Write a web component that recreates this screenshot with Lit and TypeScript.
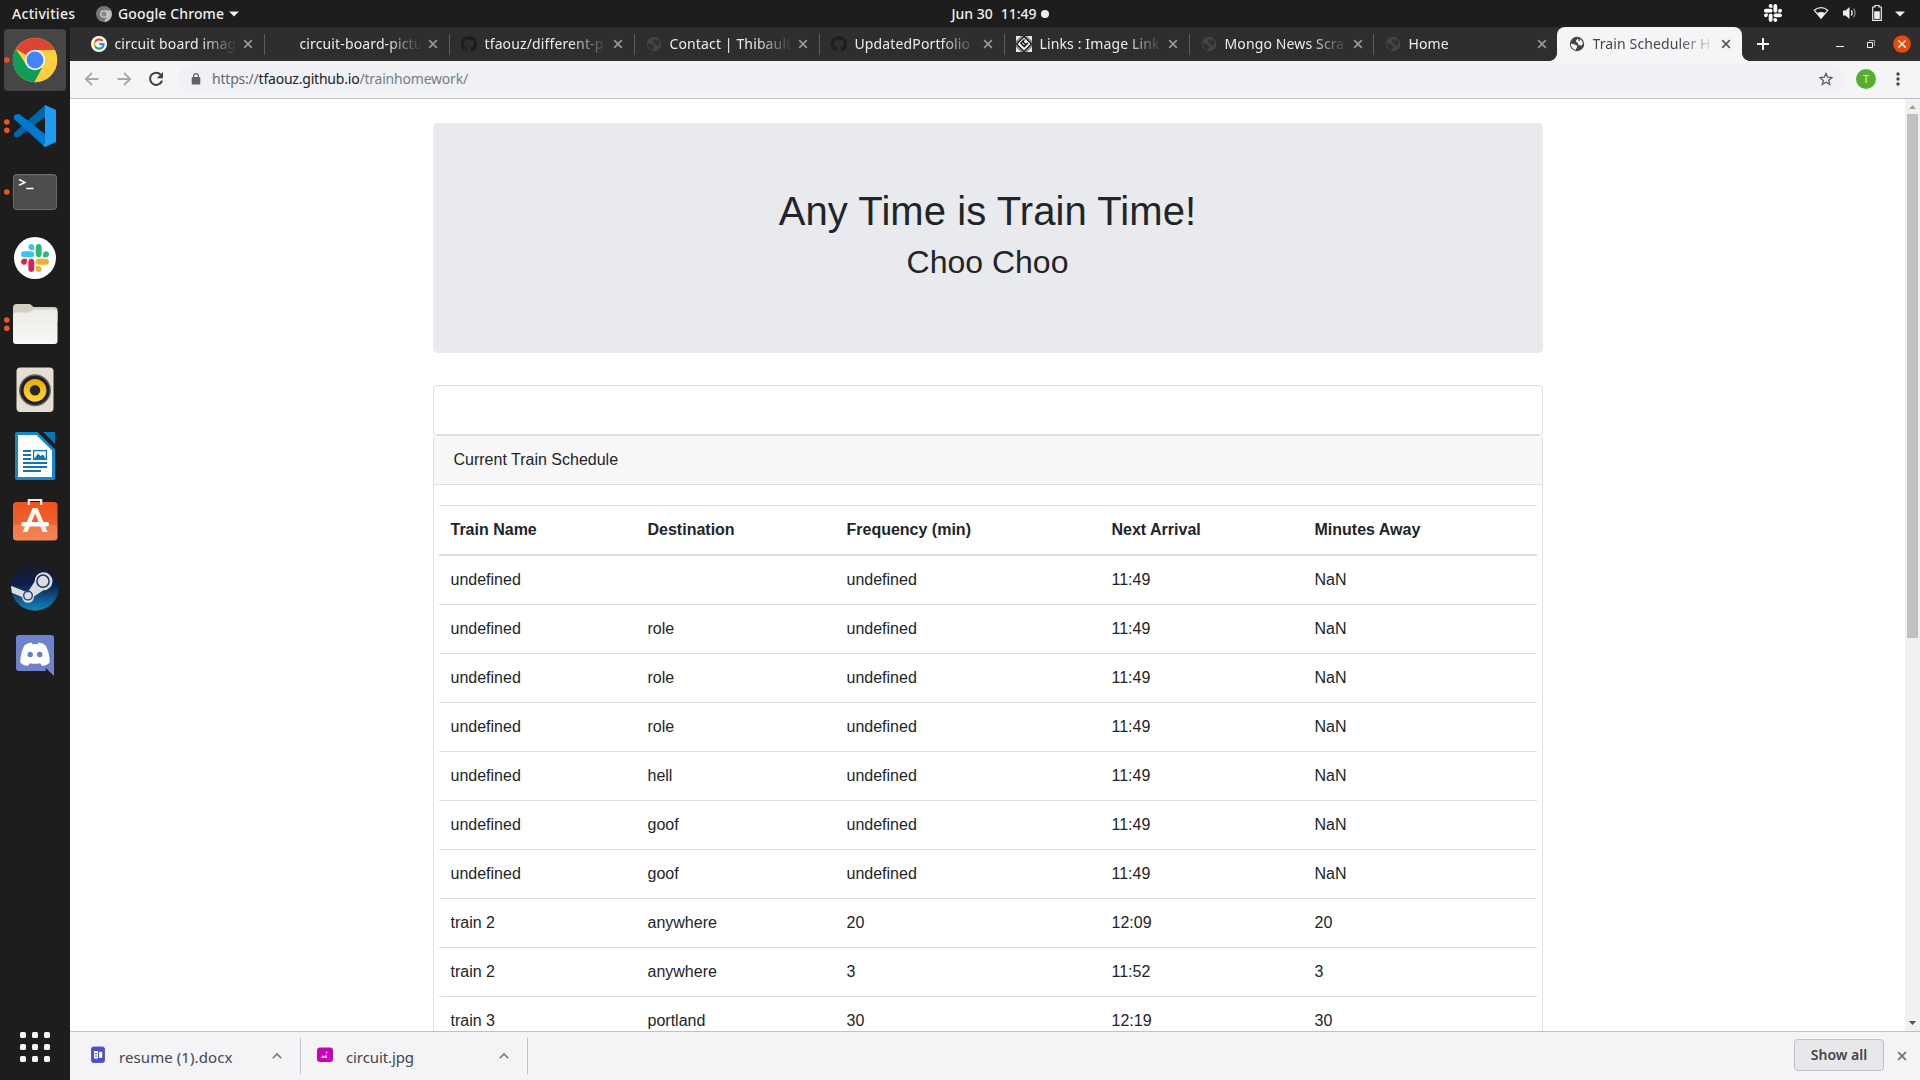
import { LitElement, html, svg, css, nothing } from "lit";
import { customElement } from "lit/decorators.js";
import { classMap } from "lit/directives/class-map.js";

interface Tab {
  title: string;
  icon: "google" | "none" | "github" | "globe" | "links";
  active?: boolean;
}

interface Train {
  name: string;
  dest: string;
  freq: string;
  next: string;
  away: string;
}

const TABS: Tab[] = [
  { title: "circuit board imag", icon: "google" },
  { title: "circuit-board-pictu", icon: "none" },
  { title: "tfaouz/different-p", icon: "github" },
  { title: "Contact | Thibault", icon: "globe" },
  { title: "UpdatedPortfolio", icon: "github" },
  { title: "Links : Image Link", icon: "links" },
  { title: "Mongo News Scra", icon: "globe" },
  { title: "Home", icon: "globe" },
  { title: "Train Scheduler H", icon: "globe", active: true },
];

const broken = (dest: string): Train => ({ name: "undefined", dest, freq: "undefined", next: "11:49", away: "NaN" });

const TRAINS: Train[] = [
  broken(""),
  broken("role"),
  broken("role"),
  broken("role"),
  broken("hell"),
  broken("goof"),
  broken("goof"),
  { name: "train 2", dest: "anywhere", freq: "20", next: "12:09", away: "20" },
  { name: "train 2", dest: "anywhere", freq: "3", next: "11:52", away: "3" },
  { name: "train 3", dest: "portland", freq: "30", next: "12:19", away: "30" },
];

const SLACK = [
  ["#e01e5a", "M25.8 77.6c0 7.1-5.8 12.9-12.9 12.9S0 84.7 0 77.6s5.8-12.9 12.9-12.9h12.9v12.9zm6.5 0c0-7.1 5.8-12.9 12.9-12.9s12.9 5.8 12.9 12.9v32.3c0 7.1-5.8 12.9-12.9 12.9s-12.9-5.8-12.9-12.9V77.6z"],
  ["#36c5f0", "M45.2 25.8c-7.1 0-12.9-5.8-12.9-12.9S38.1 0 45.2 0s12.9 5.8 12.9 12.9v12.9H45.2zm0 6.5c7.1 0 12.9 5.8 12.9 12.9s-5.8 12.9-12.9 12.9H12.9C5.8 58.1 0 52.3 0 45.2s5.8-12.9 12.9-12.9h32.3z"],
  ["#2eb67d", "M97 45.2c0-7.1 5.8-12.9 12.9-12.9s12.9 5.8 12.9 12.9-5.8 12.9-12.9 12.9H97V45.2zm-6.5 0c0 7.1-5.8 12.9-12.9 12.9s-12.9-5.8-12.9-12.9V12.9C64.7 5.8 70.5 0 77.6 0s12.9 5.8 12.9 12.9v32.3z"],
  ["#ecb22e", "M77.6 97c7.1 0 12.9 5.8 12.9 12.9s-5.8 12.9-12.9 12.9-12.9-5.8-12.9-12.9V97h12.9zm0-6.5c-7.1 0-12.9-5.8-12.9-12.9s5.8-12.9 12.9-12.9h32.3c7.1 0 12.9 5.8 12.9 12.9s-5.8 12.9-12.9 12.9H77.6z"],
];

const GITHUB =
  "M8 0C3.58 0 0 3.58 0 8c0 3.54 2.29 6.53 5.47 7.59.4.07.55-.17.55-.38 0-.19-.01-.82-.01-1.49-2.01.37-2.53-.49-2.69-.94-.09-.23-.48-.94-.82-1.13-.28-.15-.68-.52-.01-.53.63-.01 1.08.58 1.23.82.72 1.21 1.87.87 2.33.66.07-.52.28-.87.51-1.07-1.78-.2-3.64-.89-3.64-3.95 0-.87.31-1.59.82-2.15-.08-.2-.36-1.02.08-2.12 0 0 .67-.21 2.2.82.64-.18 1.32-.27 2-.27.68 0 1.36.09 2 .27 1.53-1.04 2.2-.82 2.2-.82.44 1.1.16 1.92.08 2.12.51.56.82 1.27.82 2.15 0 3.07-1.87 3.75-3.65 3.95.29.25.54.73.54 1.48 0 1.07-.01 1.93-.01 2.2 0 .21.15.46.55.38A8.013 8.013 0 0016 8c0-4.42-3.58-8-8-8z";

/* Launcher icons, each on a 70x66 tile centred at 35,33. */
const LAUNCHERS = [
  { dots: 1, art: svg`
    <rect x="4" y="2" width="62" height="62" rx="4" fill="#464646"/>
    <circle cx="35" cy="33" r="22.2" fill="#ffcd40"/>
    <path d="M35 33 L15.8 21.9 A22.2 22.2 0 0 1 54.8 23 L35 23z" fill="#db4437"/>
    <path d="M35 33 L43.7 38 L34.5 55.2 A22.2 22.2 0 0 1 15.8 21.9 L26.3 38z" fill="#0f9d58"/>
    <path d="M35 23H54.8A22.2 22.2 0 0 1 34.5 55.2L43.7 38z" fill="#ffcd40"/>
    <circle cx="35" cy="33" r="10.2" fill="#f4f4f4"/><circle cx="35" cy="33" r="8.4" fill="#4285f4"/>` },
  { dots: 2, art: svg`
    <path d="M14 43.5V40L45 12V24L18.5 44.2Q16.5 45 14 43.5z" fill="#0065a9"/>
    <path d="M14 22.5L18 21Q19.5 21 21 22.3L45 41V54L14 26z" fill="#007acc"/>
    <path d="M45 12L56 17V49L45 54L43 52.5L45 50z" fill="#1f9cf0"/>` },
  { dots: 1, art: svg`
    <rect x="13" y="15" width="44" height="36" rx="4" fill="#6b6b6b"/><rect x="14" y="16.2" width="42" height="33.8" rx="3" fill="#4c4c4c"/>
    <path d="M19 20.5L25 23.4L19 26.3M26.2 29.6H33.6" fill="none" stroke="#fff" stroke-width="1.5"/>` },
  { dots: 0, art: svg`
    <circle cx="35" cy="33" r="21" fill="#fff"/>
    <g transform="translate(21 19) scale(.228)">${SLACK.map(([c, d]) => svg`<path d=${d} fill=${c}></path>`)}</g>` },
  { dots: 2, art: svg`
    <path d="M13 17Q13 13 16.5 13H30L33.5 16H54Q57.5 16 57.5 19V30H13z" fill="#d3cfc0"/>
    <path d="M13 24.5Q13 21.5 16 21.5H29L33.5 18.5H54.5Q57.5 18.5 57.5 21V50Q57.5 53 54.5 53H16Q13 53 13 50z" fill="url(#fold)"/>` },
  { dots: 0, art: svg`
    <rect x="16.5" y="10.5" width="37" height="44.5" rx="4" fill="#e4dfd2"/>
    <circle cx="35" cy="33.3" r="16" fill="#6b6762"/><circle cx="35" cy="33.3" r="14.6" fill="#1f1e2b"/>
    <circle cx="35" cy="33.3" r="11.4" fill="url(#yel)"/><circle cx="35" cy="33.3" r="5.2" fill="#272727"/>` },
  { dots: 0, art: svg`
    <path d="M15 11Q15 9 17 9H37.5L55 26.5V55Q55 57 53 57H17Q15 57 15 55z" fill="#1388cc"/>
    <path d="M43 9H55V21z" fill="#0e75b4"/>
    <path d="M18 12H36.5L52 27.5V54H18z" fill="#fff"/>
    <path d="M23 28H31M23 32H31M23 36H31M23 40H47M23 44H47M23 48H41" stroke="#1175ae" stroke-width="1.9"/>
    <rect x="33.6" y="27.6" width="12.8" height="8.8" fill="#fff" stroke="#1175ae" stroke-width="1.3"/>
    <path d="M34 36L38 30.5L40.5 33L43 31.5L46 36z" fill="#1175ae"/>` },
  { dots: 0, art: svg`
    <rect x="13" y="13" width="44.5" height="38.5" rx="3.5" fill="url(#org)"/>
    <path d="M28.8 16V11H41.2V16" fill="none" stroke="#f4eee8" stroke-width="2.2"/>
    <path d="M32.6 19H37.6L47.5 43H42.6L35.1 24.5L27.5 43H22.6z" fill="#fbf6f2"/>
    <rect x="21" y="33" width="28" height="4.6" rx="2.3" fill="#fff"/>` },
  { dots: 0, art: svg`
    <g transform="translate(0 -.8)"><circle cx="35" cy="32.5" r="24" fill="url(#stm)"/>
    <path d="M11 31.5L27.5 38.2L34.5 27.5A9 9 0 1 1 43.5 36L34 42.4A6 6 0 1 1 22 42.8L11.8 38.5z" fill="#dcdcdc"/>
    <circle cx="43" cy="27" r="6.1" fill="none" stroke="#17356b" stroke-width="1.5"/>
    <circle cx="28" cy="41.4" r="4.3" fill="none" stroke="#1b4a80" stroke-width="1.4"/></g>` },
  { dots: 0, art: svg`
    <path d="M16 17Q16 14 19 14H51Q54 14 54 17V55L45.5 46.8L46 50H19Q16 50 16 47z" fill="#6f83cc"/>
    <path d="M20.3 41.5Q20.2 32 24.5 24.2Q28 21.6 31.5 21.5L32.4 23.2Q35 22.8 37.6 23.2L38.5 21.5Q42 21.6 45.5 24.2Q49.8 32 49.7 41.5Q46.5 44.8 42 44.8L40.2 42.2Q35 43.4 29.8 42.2L28 44.8Q23.5 44.8 20.3 41.5z" fill="#fff"/>
    <circle cx="30.2" cy="33.5" r="2.7" fill="#6a7dc8"/><circle cx="39.8" cy="33.5" r="2.7" fill="#6a7dc8"/>` },
];

const favicon = (tab: Tab) => {
  const dark = tab.active ? "#454545" : "#454344";
  const cut = tab.active ? "#f5f5f7" : "#302d2e";
  switch (tab.icon) {
    case "google":
      return svg`<circle cx="8" cy="8" r="8" fill="#fff"/><g fill="none" stroke-width="2.2">
        <path d="M4 5.7A4.7 4.7 0 0 1 11.6 4.9" stroke="#ea4335"/><path d="M4 5.7A4.7 4.7 0 0 0 4 10.3" stroke="#fbbc05"/>
        <path d="M4 10.3A4.7 4.7 0 0 0 11 11.6" stroke="#34a853"/><path d="M11 11.6A4.7 4.7 0 0 0 12.6 8.2H8.2" stroke="#4285f4"/></g>`;
    case "github":
      return svg`<path d=${GITHUB} fill="#1e1c1d"/>`;
    case "globe":
      return svg`<circle cx="8" cy="8" r="7.2" fill=${dark}/>
        <path d="M9.3 2.6L7 4.3L7.2 6.1L9 7L9.3 8.9L12.6 9.4L14 7.6Q13.7 4.5 11 2.9L10.6 5L9.3 4.8z" fill=${cut}/>
        <path d="M2 7.6L5.7 8.4L8.3 9.7L7.7 11.8L6.6 13.9Q3 13 2 9.5z" fill=${cut}/>`;
    case "links":
      return svg`<rect width="16" height="16" fill="#8b8b88"/><path d="M0 0H5L0 5zM16 0H11L16 5zM0 16H5L0 11zM16 16H11L16 11z" fill="#e8e8e0"/>
        <path d="M8 .5L15.5 8L8 15.5L.5 8z" fill="#e9e9df" stroke="#111" stroke-width="1.2"/>
        <path d="M8.5 3.6L4.9 7.2L8.2 10.6L11.8 7M6.6 5.5L9.9 8.8" fill="none" stroke="#111" stroke-width="1.4"/>`;
    default:
      return nothing;
  }
};

const cross = svg`<path d="M1.2 1.2L8.8 8.8M8.8 1.2L1.2 8.8"/>`;

@customElement("desktop-dock")
export class DesktopDock extends LitElement {
  static styles = css`
    :host { display: flex; flex-direction: column; width: 70px; height: 1053px; background: #1d1d1d; }
    .tile { display: block; width: 70px; height: 66px; flex: none; }
    .gap { flex: 1; }
    .grid { display: block; width: 30px; height: 30px; margin: 0 0 18px 20px; }
  `;
  render() {
    return html`
      ${LAUNCHERS.map(
        (l) => html`<svg class="tile" viewBox="0 0 70 66">
          <defs>
            <linearGradient id="yel" x1="0" y1="0" x2="0" y2="1"><stop offset="0" stop-color="#e6ac04"/><stop offset="1" stop-color="#ffd83c"/></linearGradient>
            <linearGradient id="fold" x1="0" y1="0" x2="0" y2="1"><stop offset="0" stop-color="#edebe5"/><stop offset="1" stop-color="#f9f8f5"/></linearGradient>
            <linearGradient id="org" x1="0" y1="0" x2="0" y2="1"><stop offset="0" stop-color="#f0521f"/><stop offset=".58" stop-color="#ef6430"/><stop offset=".6" stop-color="#f17a4c"/><stop offset="1" stop-color="#f08552"/></linearGradient>
            <linearGradient id="stm" x1="0" y1="0" x2="0" y2="1"><stop offset="0" stop-color="#1b1c24"/><stop offset=".45" stop-color="#0d1e4b"/><stop offset="1" stop-color="#1287c0"/></linearGradient>
          </defs>
          ${l.art}
          ${l.dots === 1 ? svg`<circle cx="6.8" cy="33" r="2.8" fill="#e95420"/>` : nothing}
          ${l.dots === 2 ? svg`<circle cx="6.8" cy="29" r="2.8" fill="#e95420"/><circle cx="6.8" cy="37.3" r="2.8" fill="#e95420"/>` : nothing}
        </svg>`
      )}
      <div class="gap"></div>
      <svg class="grid" viewBox="0 0 30 30">
        ${[0, 12, 24].map((y) => [0, 12, 24].map((x) => svg`<rect x=${x} y=${y} width="6" height="6" rx="1.5" fill="#f4f4f4"></rect>`))}
      </svg>
    `;
  }
}

@customElement("train-page")
export class TrainPage extends LitElement {
  static styles = css`
    :host { display: block; height: 932px; overflow: hidden; background: #fff; color: #212529; font: 16px/24px "Liberation Sans", Arial, sans-serif; }
    .container { width: 1110px; margin: 24px auto 0; }
    .jumbotron { padding: 64px 32px; margin-bottom: 32px; background: #e9eaee; border-radius: 4.8px; text-align: center; }
    h1, h2 { margin: 0 0 8px; font-weight: 400; line-height: 1.2; }
    h1 { font-size: 40px; letter-spacing: 0.08px; }
    h2 { font-size: 32px; }
    .card { border: 1px solid #dfdfdf; border-radius: 4px; box-sizing: border-box; }
    .empty { height: 50px; }
    .head { padding: 12px 20px; background: #f7f7f7; border-bottom: 1px solid #dfdfdf; border-radius: 3px 3px 0 0; }
    .body { padding: 20px 5px; }
    table { width: 100%; table-layout: fixed; border-collapse: collapse; }
    th, td { padding: 12px; text-align: left; vertical-align: top; border-top: 1px solid #dddfe6; height: 24px; }
    thead th { border-bottom: 2px solid #dddfe6; vertical-align: bottom; }
    .c1 { width: 197px; }
    .c2 { width: 199px; }
    .c3 { width: 265px; }
    .c4 { width: 203px; }
  `;
  render() {
    return html`
      <div class="container">
        <div class="jumbotron"><h1>Any Time is Train Time!</h1><h2>Choo Choo</h2></div>
        <div class="card empty"></div>
        <div class="card">
          <div class="head">Current Train Schedule</div>
          <div class="body">
            <table>
              <colgroup><col class="c1"><col class="c2"><col class="c3"><col class="c4"><col></colgroup>
              <thead><tr><th>Train Name</th><th>Destination</th><th>Frequency (min)</th><th>Next Arrival</th><th>Minutes Away</th></tr></thead>
              <tbody>
                ${TRAINS.map((t) => html`<tr><td>${t.name}</td><td>${t.dest}</td><td>${t.freq}</td><td>${t.next}</td><td>${t.away}</td></tr>`)}
              </tbody>
            </table>
          </div>
        </div>
      </div>
    `;
  }
}

@customElement("app-root")
export class AppRoot extends LitElement {
  static styles = css`
    :host { display: block; width: 1920px; height: 1080px; overflow: hidden; background: #1d1d1d; font: 14px/20px "Noto Sans", "Open Sans", sans-serif; }
    svg { display: block; flex: none; }
    .topbar { display: grid; grid-template-columns: 1fr auto 1fr; align-items: center; height: 27px; color: #efefef; font-weight: 500; }
    .left { display: flex; align-items: center; padding-left: 12px; }
    .act { width: 84px; letter-spacing: 0.3px; }
    .app { margin: 0 5px 0 6px; letter-spacing: 0.12px; }
    .clock { display: flex; align-items: center; gap: 8px; margin-left: 80px; }
    .clock .dot { margin-left: -4px; }
    .right { display: flex; justify-content: flex-end; align-items: center; padding-right: 15px; }
    .tray1 { margin-right: 31px; margin-top: -1px; }
    .tray2 { margin-right: 13px; margin-top: -1px; }
    .tray3 { margin-right: 15px; margin-top: -1px; }
    .tray4 { margin-right: 13px; margin-top: -2px; }
    .main { display: flex; }
    .window { width: 1850px; }
    .strip { display: flex; height: 34px; padding-left: 8.5px; background: #302d2e; box-sizing: border-box; }
    .tab { position: relative; display: flex; align-items: center; width: 185px; box-sizing: border-box; padding-left: 12px; color: #ececec; }
    .tab.narrow { width: 184px; }
    .tab.sep::before { content: ""; position: absolute; left: 0; top: 7px; width: 1px; height: 21px; background: #5e5c5d; }
    .title { width: 125px; margin-left: 8px; white-space: nowrap; letter-spacing: 0.13px; -webkit-mask-image: linear-gradient(90deg, #000 86px, transparent 122px); mask-image: linear-gradient(90deg, #000 86px, transparent 122px); }
    .x { margin-left: 3px; fill: none; stroke: #979697; stroke-width: 1.7; }
    .tab.active { width: 185px; background: #f5f5f7; color: #45454a; border-radius: 8px 8px 0 0; }
    .tab.active::before, .tab.active::after { content: ""; position: absolute; bottom: 0; width: 8px; height: 8px; }
    .tab.active::before { left: -8px; background: radial-gradient(circle at 0 0, transparent 7.6px, #f5f5f7 8.2px); }
    .tab.active::after { right: -8px; background: radial-gradient(circle at 100% 0, transparent 7.6px, #f5f5f7 8.2px); }
    .active .x { stroke: #5a5a5e; }
    .plus { margin: 11px 0 0 15px; }
    .winbtns { display: flex; align-items: center; margin-left: auto; padding-right: 9px; }
    .min { margin-right: 23px; }
    .restore { margin-right: 18px; }
    .toolbar { display: flex; align-items: center; height: 38px; padding: 0 0 2px 14px; background: #f5f5f7; border-bottom: 1px solid #b9bfcc; box-sizing: border-box; }
    .nav { margin-right: 16px; }
    .omni { display: flex; align-items: center; width: 1666px; height: 28px; margin-left: -2px; padding: 0 11px 0 13px; border-radius: 14px; background: #f0f1f4; box-sizing: border-box; }
    .url { flex: 1; margin-left: 11px; color: #7a7d82; letter-spacing: -0.21px; }
    .url b { font-weight: 400; color: #202124; }
    .url .scheme { color: #66696e; }
    .avatar { width: 20px; height: 20px; margin-left: 12px; border-radius: 50%; background: #53b02f; color: #d9f5cd; font-size: 11px; line-height: 20px; text-align: center; }
    .menu { margin-left: 20px; }
    .view { display: flex; }
    train-page { width: 1835px; }
    .scroll { display: flex; flex-direction: column; width: 15px; height: 932px; background: #f1f1f1; }
    .thumb { width: 11px; height: 524px; margin-left: 2px; background: #c1c1c1; }
    .room { flex: 1; }
    .shelf { display: flex; align-items: center; height: 49px; background: #f4f4f7; border-top: 1px solid #bfbfcd; box-sizing: border-box; font-size: 15px; color: #45454a; }
    .file { display: flex; align-items: center; width: 227px; height: 36px; padding-left: 16px; border-right: 1px solid #bfbfcd; box-sizing: border-box; }
    .file.first { width: 231px; padding-left: 20px; }
    .name { flex: 1; margin: 1px 0 0 13px; letter-spacing: -0.1px; }
    .first .name { margin-left: 14px; letter-spacing: 0.08px; }
    .chev { margin-right: 18px; }
    .file svg:first-child { margin-top: -2px; }
    .all { width: 90px; height: 32px; margin: -2px 0 0 auto; border: 1px solid #bfbfcd; border-radius: 4px; background: #e7e8ea; box-sizing: border-box; font-size: 14px; font-weight: 600; line-height: 30px; text-align: center; }
    .shut { margin: -1px 13px 0 13px; fill: none; stroke: #6f7072; stroke-width: 1.7; }
  `;

  render() {
    return html`
      <div class="topbar">
        <div class="left">
          <span class="act">Activities</span>
          <svg width="16" height="16" viewBox="0 0 16 16"><circle cx="8" cy="8" r="8" fill="#777"/><path d="M8 4.4H15A8 8 0 0 1 8 16L11 10z" fill="#bdbdbd"/><circle cx="8" cy="8" r="3.8" fill="#d8d8d8"/><circle cx="8" cy="8" r="2.7" fill="#888"/></svg>
          <span class="app">Google Chrome</span>
          <svg width="10" height="6" viewBox="0 0 10 6"><path d="M0 .5H10L5 5.5z" fill="#efefef"/></svg>
        </div>
        <div class="clock"><span>Jun 30</span><span>11:49</span><svg class="dot" width="8" height="8"><circle cx="4" cy="4" r="4" fill="#efefef"/></svg></div>
        <div class="right">
          <svg class="tray1" width="18" height="18" viewBox="0 0 122.8 122.8">${SLACK.map(([, d]) => svg`<path d=${d} fill="#fff"></path>`)}</svg>
          <svg class="tray2" width="16" height="14" viewBox="0 0 16 14"><path d="M1.2 4.2Q8 -.8 14.8 4.2L8 12.4z" fill="none" stroke="#ededed" stroke-width="1.2"/><path d="M3.8 7.2Q8 5 12.2 7.2L8 12.6z" fill="#ededed"/></svg>
          <svg class="tray3" width="15" height="14" viewBox="0 0 15 14"><path d="M1 4.5H3.5L7.5 1V13L3.5 9.5H1z" fill="#ededed"/><path d="M9.4 4.4Q11 7 9.4 9.6" fill="none" stroke="#ededed" stroke-width="1.4"/><path d="M11.6 2.6Q14.4 7 11.6 11.4" fill="none" stroke="#8a8a8a" stroke-width="1.3"/></svg>
          <svg class="tray4" width="10" height="16" viewBox="0 0 10 16"><path d="M3 .5H7V2H9.3V15.3H.7V2H3z" fill="none" stroke="#ededed" stroke-width="1.2"/><rect x="2.2" y="6.3" width="5.6" height="7.6" fill="#ededed"/></svg>
          <svg width="10" height="6" viewBox="0 0 10 6"><path d="M0 .5H10L5 5.5z" fill="#efefef"/></svg>
        </div>
      </div>
      <div class="main">
        <desktop-dock></desktop-dock>
        <div class="window">
          <div class="strip">
            ${TABS.map(
              (t, i) => html`<div class=${classMap({ tab: true, active: !!t.active, narrow: i > 5, sep: i > 0 && !t.active })}>
                <svg width="16" height="16" viewBox="0 0 16 16">${favicon(t)}</svg>
                <span class="title">${t.title}</span>
                <svg class="x" width="10" height="10" viewBox="0 0 10 10">${cross}</svg>
              </div>`
            )}
            <svg class="plus" width="12" height="12" viewBox="0 0 12 12"><path d="M6 0V12M0 6H12" stroke="#f2f2f2" stroke-width="2"/></svg>
            <div class="winbtns">
              <svg class="min" width="8" height="8"><path d="M0 6.5H8" stroke="#f2f2f2" stroke-width="1"/></svg>
              <svg class="restore" width="8" height="8"><path d="M.5 2.5H5.5V7.5H.5z" fill="none" stroke="#f2f2f2"/><path d="M2 .5H7.5V6" fill="none" stroke="#a8a6a7"/></svg>
              <svg width="18" height="18" viewBox="0 0 18 18"><circle cx="9" cy="9" r="8.8" fill="#e84a0c"/><path d="M5.4 5.4L12.6 12.6M12.6 5.4L5.4 12.6" stroke="#fff" stroke-width="1.4"/></svg>
            </div>
          </div>
          <div class="toolbar">
            <svg class="nav" width="16" height="16" viewBox="0 0 16 16"><path d="M14.5 8H2M8 2L1.8 8L8 14" fill="none" stroke="#a9a9ac" stroke-width="1.9"/></svg>
            <svg class="nav" width="16" height="16" viewBox="0 0 16 16"><path d="M1.5 8H14M8 2L14.2 8L8 14" fill="none" stroke="#a9a9ac" stroke-width="1.9"/></svg>
            <svg class="nav" width="16" height="16" viewBox="0 0 16 16"><path d="M12.8 3.8A6.1 6.1 0 1 0 14 9.6" fill="none" stroke="#404043" stroke-width="2"/><path d="M15 1V7.2H8.8z" fill="#404043"/></svg>
            <div class="omni">
              <svg width="10" height="12" viewBox="0 0 10 12"><rect x=".7" y="4" width="8.6" height="7.5" rx="1" fill="#5f6368"/><path d="M2.7 4.5V3A2.3 2.3 0 0 1 7.3 3V4.5" fill="none" stroke="#5f6368" stroke-width="1.3"/></svg>
              <span class="url"><span class="scheme">https://</span><b>tfaouz.github.io</b>/trainhomework/</span>
              <svg width="14" height="14" viewBox="0 0 14 14"><path d="M7 1.4L8.7 5.2L12.9 5.6L9.7 8.4L10.7 12.5L7 10.3L3.3 12.5L4.3 8.4L1.1 5.6L5.3 5.2z" fill="none" stroke="#5a5d62" stroke-width="1.3"/></svg>
            </div>
            <div class="avatar">T</div>
            <svg class="menu" width="4" height="14" viewBox="0 0 4 14"><g fill="#47474a"><circle cx="2" cy="2" r="1.7"/><circle cx="2" cy="7" r="1.7"/><circle cx="2" cy="12" r="1.7"/></g></svg>
          </div>
          <div class="view">
            <train-page></train-page>
            <div class="scroll">
              <svg width="15" height="15"><path d="M4 10L7.5 6L11 10z" fill="#a3a3a3"/></svg>
              <div class="thumb"></div>
              <div class="room"></div>
              <svg width="15" height="15"><path d="M4 5L7.5 9L11 5z" fill="#505050"/></svg>
            </div>
          </div>
          <div class="shelf">
            <div class="file first">
              <svg width="15" height="18" viewBox="0 0 15 18"><rect x="1.5" y="1" width="13" height="15.5" rx="2" fill="#4a4fd0" stroke="#5c5fae"/><rect x="4" y="5" width="4" height="7.5" fill="#fff"/><rect x="9" y="5.8" width="3.2" height="6" fill="#fff"/><path d="M5 7.5H7M5 10H7" stroke="#4a4fd0"/></svg>
              <span class="name">resume (1).docx</span>
              <svg class="chev" width="10" height="8" viewBox="0 0 10 8"><path d="M.8 6.3L5 2L9.2 6.3" fill="none" stroke="#77787b" stroke-width="1.6"/></svg>
            </div>
            <div class="file">
              <svg width="16" height="16" viewBox="0 0 16 16"><rect x=".5" y="1" width="15" height="13.5" rx="2" fill="#cb00bd" stroke="#96218e"/><path d="M4 11L5.5 8L7.5 9.8L9 7L10.5 11z" fill="#f0b8ec"/><rect x="8.8" y="4.6" width="1.6" height="1.6" fill="#f0b8ec"/></svg>
              <span class="name">circuit.jpg</span>
              <svg class="chev" width="10" height="8" viewBox="0 0 10 8"><path d="M.8 6.3L5 2L9.2 6.3" fill="none" stroke="#77787b" stroke-width="1.6"/></svg>
            </div>
            <div class="all">Show all</div>
            <svg class="shut" width="10" height="10" viewBox="0 0 10 10">${cross}</svg>
          </div>
        </div>
      </div>
    `;
  }
}
